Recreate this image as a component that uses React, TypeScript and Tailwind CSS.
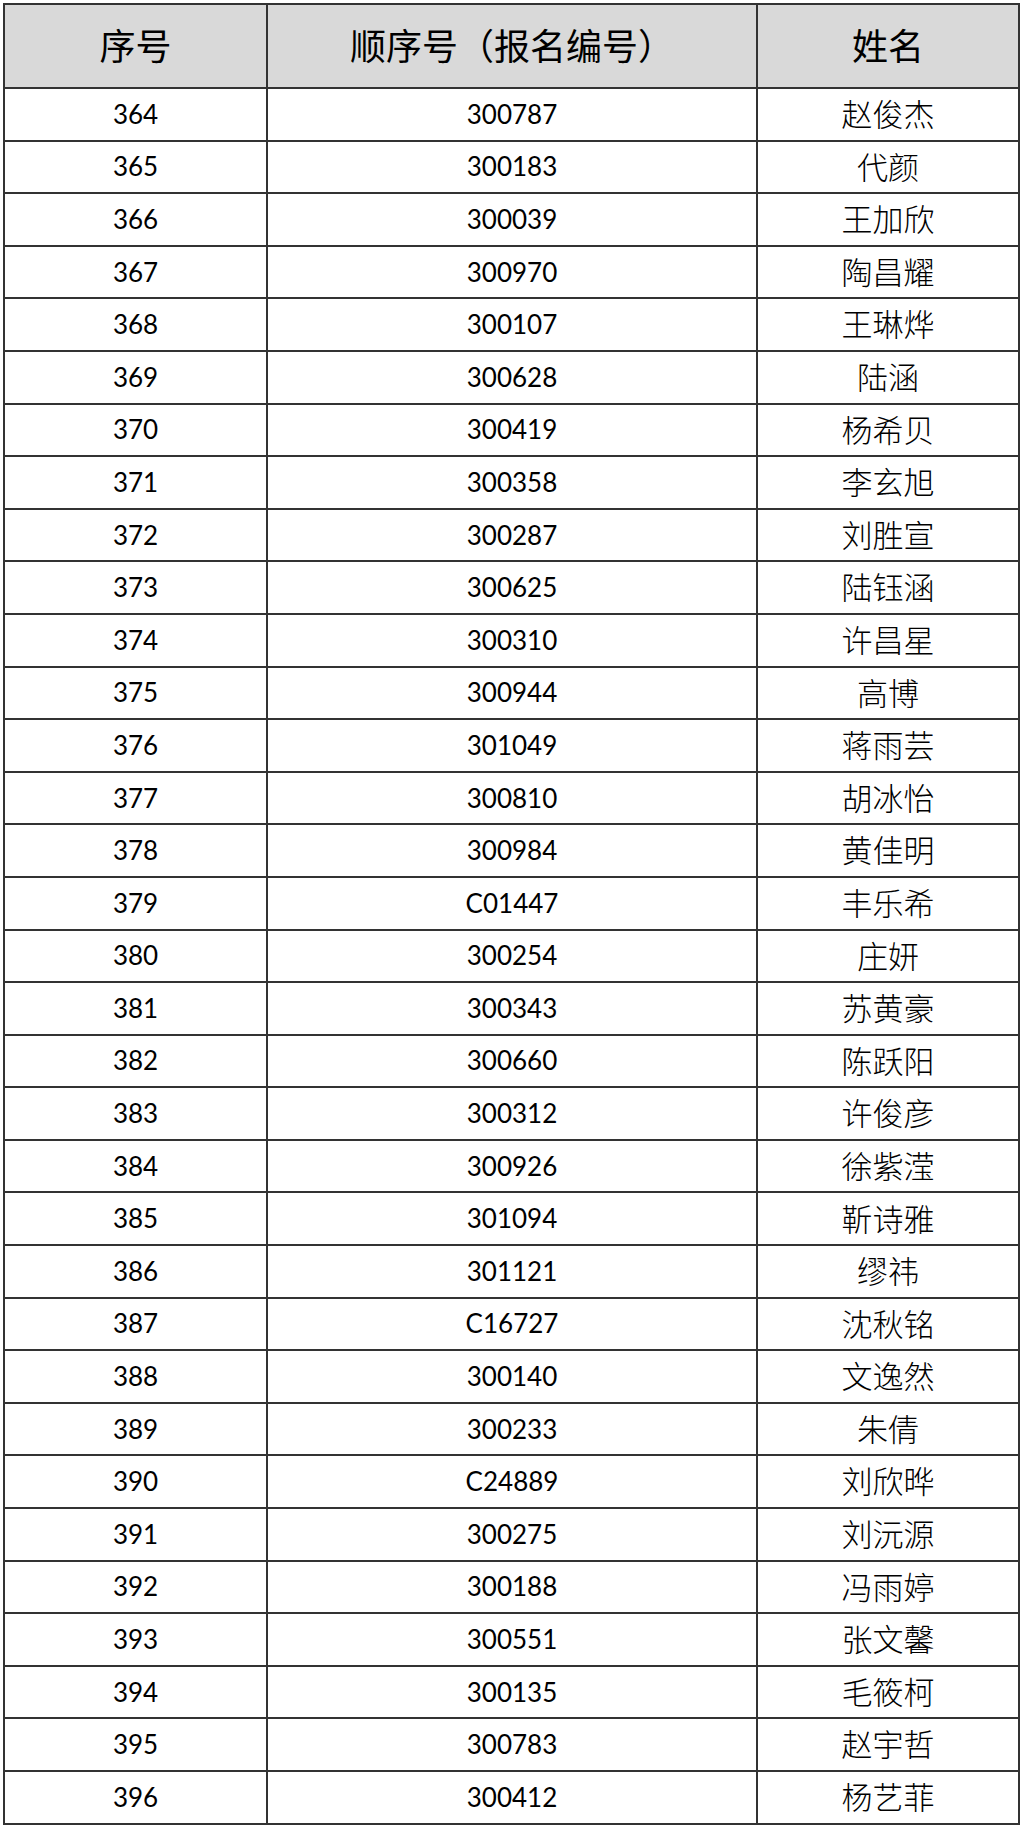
import React from 'react';

// 名单数据：序号从 364 开始
const rows: [string, string][] = [
  ['300787', '赵俊杰'],
  ['300183', '代颜'],
  ['300039', '王加欣'],
  ['300970', '陶昌耀'],
  ['300107', '王琳烨'],
  ['300628', '陆涵'],
  ['300419', '杨希贝'],
  ['300358', '李玄旭'],
  ['300287', '刘胜宣'],
  ['300625', '陆钰涵'],
  ['300310', '许昌星'],
  ['300944', '高博'],
  ['301049', '蒋雨芸'],
  ['300810', '胡冰怡'],
  ['300984', '黄佳明'],
  ['C01447', '丰乐希'],
  ['300254', '庄妍'],
  ['300343', '苏黄豪'],
  ['300660', '陈跃阳'],
  ['300312', '许俊彦'],
  ['300926', '徐紫滢'],
  ['301094', '靳诗雅'],
  ['301121', '缪祎'],
  ['C16727', '沈秋铭'],
  ['300140', '文逸然'],
  ['300233', '朱倩'],
  ['C24889', '刘欣晔'],
  ['300275', '刘沅源'],
  ['300188', '冯雨婷'],
  ['300551', '张文馨'],
  ['300135', '毛筱柯'],
  ['300783', '赵宇哲'],
  ['300412', '杨艺菲'],
];

const cell = 'flex items-center justify-center border-r-2 border-b-2 border-[#333]';
const numFont = "font-['Lato','Liberation_Sans',sans-serif] text-[26px] text-black";
const cjkFont = "font-['Noto_Sans_CJK_SC',sans-serif]";
const head = `${cell} h-[84px] pb-[4px] bg-[#d9d9d9] ${cjkFont} font-normal text-[36px] text-black`;

export default function App() {
  return (
    <div className="w-[1024px] h-[1826px] bg-white pl-[3px] pt-[3px]">
      <div className="w-[1017px] grid grid-cols-[263px_490px_262px] border-l-2 border-t-2 border-[#333]">
        {/* 表头 */}
        <div className={head}>序号</div>
        <div className={head}>顺序号（报名编号）</div>
        <div className={head}>姓名</div>

        {rows.map(([code, name], i) => (
          <React.Fragment key={code}>
            <div className={`${cell} h-[52.6px] ${numFont}`}>{364 + i}</div>
            <div className={`${cell} h-[52.6px] ${numFont}`}>{code}</div>
            <div className={`${cell} h-[52.6px] pb-[2px] ${cjkFont} font-light text-[31px] text-black`}>{name}</div>
          </React.Fragment>
        ))}
      </div>
    </div>
  );
}
